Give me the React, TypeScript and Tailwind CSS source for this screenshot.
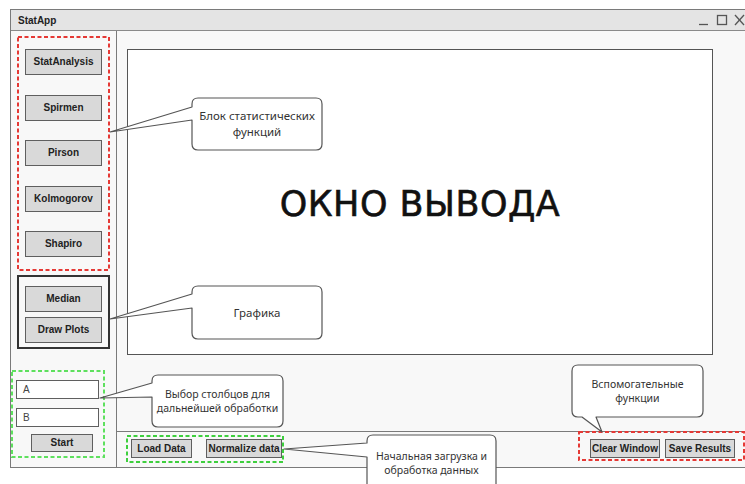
import React from "react";

type BtnProps = { label: string; className?: string };

const Btn = ({ label, className = "" }: BtnProps) => (
  <div
    className={`flex items-center justify-center border border-[#5f5f5f] bg-[#d9d9d9] text-[10px] font-bold text-[#222] leading-none ${className}`}
  >
    {label}
  </div>
);

// Dashed group frame, drawn with an svg so the dash rhythm stays short and tight
const Frame = ({
  w,
  h,
  color,
  className = "",
  children,
}: {
  w: number;
  h: number;
  color: string;
  className?: string;
  children: React.ReactNode;
}) => (
  <div className={`relative shrink-0 ${className}`}>
    <svg
      className="absolute left-0 top-0 pointer-events-none"
      width={w}
      height={h}
      viewBox={`0 0 ${w} ${h}`}
    >
      <rect
        x={1}
        y={1}
        width={w - 2}
        height={h - 2}
        fill="none"
        stroke={color}
        strokeWidth={2}
        strokeDasharray="4 2.5"
      />
    </svg>
    {children}
  </div>
);

const WindowControls = () => (
  <svg width="46" height="12" viewBox="0 0 46 12" className="text-[#555]">
    <line x1="0" y1="10.5" x2="9" y2="10.5" stroke="currentColor" strokeWidth="1.3" />
    <rect x="18.5" y="1.5" width="9" height="9" fill="none" stroke="currentColor" strokeWidth="1.3" />
    <line x1="36" y1="1" x2="45" y2="11" stroke="currentColor" strokeWidth="1.3" />
    <line x1="45" y1="1" x2="36" y2="11" stroke="currentColor" strokeWidth="1.3" />
  </svg>
);

// Speech-bubble outlines with their pointers
const bubbles = [
  "M198 98 H316 Q322 98 322 104 V144 Q322 150 316 150 H198 Q192 150 192 144 V120 L110 132 L192 107 V104 Q192 98 198 98 Z",
  "M198 286 H316 Q322 286 322 292 V333 Q322 339 316 339 H198 Q192 339 192 333 V308 L110 319 L192 294 V292 Q192 286 198 286 Z",
  "M158 375 H277 Q283 375 283 381 V421 Q283 427 277 427 H158 Q152 427 152 421 V397 L100 398 L152 383 V381 Q152 375 158 375 Z",
  "M373 435 H490 Q496 435 496 441 V500 H367 V457 L284 449 L367 443 V441 Q367 435 373 435 Z",
  "M578 365 H697 Q703 365 703 371 V411 Q703 417 697 417 H596 L602 432 L582 417 H578 Q572 417 572 411 V371 Q572 365 578 365 Z",
];

const Note = ({
  className,
  lines,
  size = "text-[10.5px]",
}: {
  className: string;
  lines: string[];
  size?: string;
}) => (
  <div
    className={`absolute flex flex-col items-center justify-center text-center text-[#333] font-['Noto_Sans',sans-serif] ${size} ${className}`}
  >
    {lines.map((l) => (
      <div key={l}>{l}</div>
    ))}
  </div>
);

export default function App() {
  return (
    <div className="relative w-[745px] h-[484px] overflow-hidden bg-white pl-[10px] pt-[9px] font-['Liberation_Sans',Arial,sans-serif]">
      <div className="flex w-[745px] h-[459px] flex-col border border-[#7a7a7a] bg-[#f8f8f8]">
        {/* title bar */}
        <div className="flex h-[21px] shrink-0 items-center justify-between border-b border-[#8a8a8a] bg-[#e4e4e4] pl-[7px] pr-[9px]">
          <span className="text-[10px] font-bold text-[#222]">StatApp</span>
          <WindowControls />
        </div>

        <div className="flex flex-1">
          {/* left tool column */}
          <div className="flex w-[106px] shrink-0 flex-col border-r border-[#7a7a7a]">
            <Frame w={93} h={235} color="#e53935" className="ml-[6px] mt-[5px] w-[93px] h-[235px]">
              <div className="flex h-full flex-col items-center justify-between pt-[13px] pb-[14px]">
                <Btn label="StatAnalysis" className="w-[77px] h-[26px]" />
                <Btn label="Spirmen" className="w-[77px] h-[26px]" />
                <Btn label="Pirson" className="w-[77px] h-[26px]" />
                <Btn label="Kolmogorov" className="w-[77px] h-[26px]" />
                <Btn label="Shapiro" className="w-[77px] h-[26px]" />
              </div>
            </Frame>

            <div className="ml-[6px] mt-[4px] flex h-[74px] w-[93px] flex-col items-center gap-[5px] border-2 border-[#333] pt-[9px]">
              <Btn label="Median" className="w-[77px] h-[26px]" />
              <Btn label="Draw Plots" className="w-[77px] h-[26px]" />
            </div>

            <Frame w={94} h={88} color="#5ee05e" className="mt-[21px] w-[94px] h-[88px]">
              <div className="flex flex-col items-start pl-[5px] pt-[10px]">
                <div className="flex h-[19px] w-[83px] items-center border border-[#5f5f5f] bg-white pl-[6px] text-[10px] text-[#444]">
                  A
                </div>
                <div className="mt-[9px] flex h-[19px] w-[83px] items-center border border-[#5f5f5f] bg-white pl-[6px] text-[10px] text-[#444]">
                  B
                </div>
                <Btn label="Start" className="ml-[15px] mt-[7px] w-[62px] h-[18px]" />
              </div>
            </Frame>
          </div>

          {/* output area and bottom toolbar */}
          <div className="flex flex-1 flex-col">
            <div className="h-[400px] shrink-0 pl-[10px] pt-[18px]">
              <div className="flex h-[306px] w-[586px] items-center justify-center border border-[#555] bg-white">
                <span className="mt-[4px] font-['DejaVu_Sans',sans-serif] text-[35px] leading-none text-[#111] tracking-[0.5px] [-webkit-text-stroke:0.6px_#111]">
                  ОКНО ВЫВОДА
                </span>
              </div>
            </div>
            <div className="flex flex-1 items-start justify-between border-t border-[#7a7a7a]">
              <Frame w={158} h={28} color="#3ecf3e" className="ml-[9px] mt-[3px] w-[158px] h-[28px]">
                <div className="flex items-center gap-[14px] pl-[5px] pt-[4px]">
                  <Btn label="Load Data" className="w-[61px] h-[19px]" />
                  <Btn label="Normalize data" className="w-[76px] h-[19px]" />
                </div>
              </Frame>
              <Frame w={167} h={30} color="#e53935" className="-mt-px mr-[9px] w-[167px] h-[30px]">
                <div className="flex items-center gap-[5px] pl-[12px] pt-[8px]">
                  <Btn label="Clear Window" className="w-[70px] h-[19px]" />
                  <Btn label="Save Results" className="w-[70px] h-[19px]" />
                </div>
              </Frame>
            </div>
          </div>
        </div>
      </div>

      {/* annotation bubbles */}
      <svg className="pointer-events-none absolute left-0 top-0" width="745" height="484" viewBox="0 0 745 484">
        {bubbles.map((d) => (
          <path key={d} d={d} fill="#fff" stroke="#555" strokeWidth="1.2" strokeLinejoin="round" />
        ))}
      </svg>
      <Note className="left-[192px] top-[98px] w-[130px] h-[52px] leading-[16px]" size="text-[11.5px]" lines={["Блок статистических", "функций"]} />
      <Note className="left-[192px] top-[286px] w-[130px] h-[53px]" size="text-[11.5px]" lines={["Графика"]} />
      <Note className="left-[152px] top-[375px] w-[131px] h-[52px] leading-[14px]" lines={["Выбор столбцов для", "дальнейшей обработки"]} />
      <Note className="left-[367px] top-[449px] w-[129px] h-[28px] leading-[14px]" lines={["Начальная загрузка и", "обработка данных"]} />
      <Note className="left-[572px] top-[365px] w-[131px] h-[52px] leading-[14px]" lines={["Вспомогательные", "функции"]} />
    </div>
  );
}
